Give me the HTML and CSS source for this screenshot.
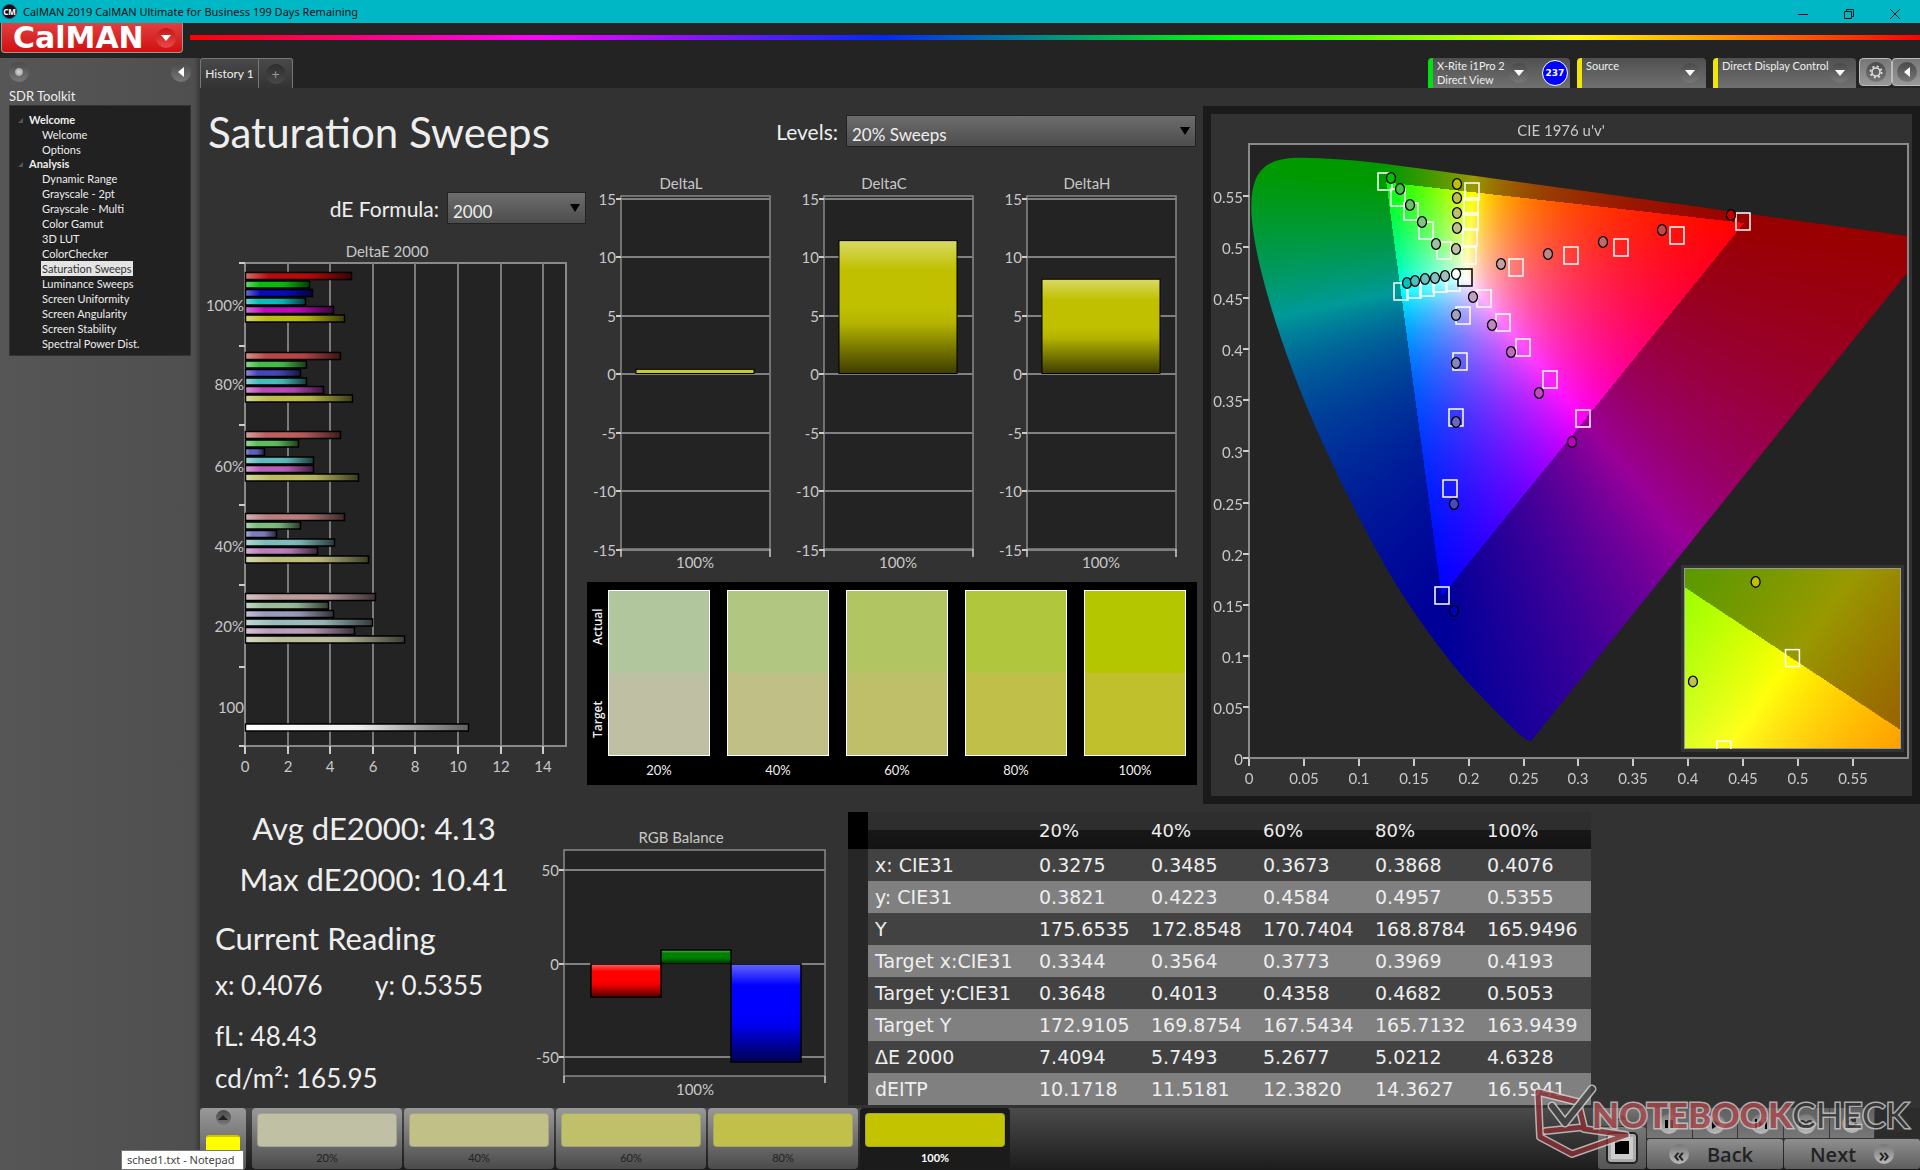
FILE: index.html
```html
<!DOCTYPE html>
<html lang="en">
<head>
<meta charset="utf-8">
<title>CalMAN 2019 CalMAN Ultimate for Business</title>
<link rel="stylesheet" href="styles.css">
</head>
<body>
<div class="app">
  <header class="titlebar">
    <span class="app-icon">CM</span>
    <span class="titlebar-text">CalMAN 2019 CalMAN Ultimate for Business 199 Days Remaining</span>
    <div class="window-buttons">
      <button aria-label="Minimize"><svg width="10" height="10" viewBox="0 0 10 10"><path d="M0 5.5h10"/></svg></button>
      <button aria-label="Restore"><svg width="10" height="10" viewBox="0 0 10 10"><path d="M.5 2.5h7v7h-7zM2.5 2.5v-2h7v7h-2"/></svg></button>
      <button aria-label="Close"><svg width="10" height="10" viewBox="0 0 10 10"><path d="M0 0l10 10M10 0L0 10"/></svg></button>
    </div>
  </header>
  <div class="brandbar">
    <button class="brand">CalMAN <span class="round red"><i class="tri down"></i></span></button>
    <div class="spectrum"></div>
  </div>
  <div class="body">
    <aside class="sidebar">
      <div class="side-tools"><span class="round"><i class="dot"></i></span><button class="round" aria-label="Collapse"><i class="tri left"></i></button></div>
      <h2>SDR Toolkit</h2>
      <nav class="tree">
        <h3>Welcome</h3>
        <ul><li><a href="#">Welcome</a></li><li><a href="#">Options</a></li></ul>
        <h3>Analysis</h3>
        <ul>
          <li><a href="#">Dynamic Range</a></li><li><a href="#">Grayscale - 2pt</a></li><li><a href="#">Grayscale - Multi</a></li>
          <li><a href="#">Color Gamut</a></li><li><a href="#">3D LUT</a></li><li><a href="#">ColorChecker</a></li>
          <li><a href="#" class="current">Saturation Sweeps</a></li><li><a href="#">Luminance Sweeps</a></li><li><a href="#">Screen Uniformity</a></li>
          <li><a href="#">Screen Angularity</a></li><li><a href="#">Screen Stability</a></li><li><a href="#">Spectral Power Dist.</a></li>
        </ul>
      </nav>
    </aside>
    <div class="main">
      <div class="tabrow">
        <div class="tabs"><button>History 1</button><button class="add" aria-label="Add tab"><span class="round dim">+</span></button></div>
        <div class="devices">
          <button class="device meter"><span class="device-name">X-Rite i1Pro 2<br>Direct View</span><span class="round"><i class="tri down"></i></span><span class="count">237</span></button>
          <button class="device source"><span class="device-name">Source</span><span class="round"><i class="tri down"></i></span></button>
          <button class="device display"><span class="device-name">Direct Display Control</span><span class="round"><i class="tri down"></i></span></button>
          <div class="tools">
            <button aria-label="Settings"><span class="round"><svg width="14" height="14" viewBox="0 0 14 14"><circle cx="7" cy="7" r="4" fill="none" stroke="#ddd" stroke-width="1.6"/><circle cx="7" cy="7" r="5.6" fill="none" stroke="#ddd" stroke-width="1.8" stroke-dasharray="2 2.4"/></svg></span></button>
            <button aria-label="Back"><span class="round"><i class="tri left"></i></span></button>
          </div>
        </div>
      </div>
      <main class="workspace">
        <div class="upper">
          <section class="col-error">
            <h1>Saturation Sweeps</h1>
            <div class="field formula"><label for="formula">dE Formula:</label><select id="formula"><option>2000</option></select></div>
            <svg class="chart" id="deltae" viewBox="0 0 387 545" role="img" aria-label="DeltaE 2000"></svg>
          </section>
          <section class="col-delta">
            <div class="field levels"><label for="levels">Levels:</label><select id="levels"><option>20% Sweeps</option></select></div>
            <div class="delta-charts">
              <svg class="chart delta" viewBox="0 0 203 407" data-title="DeltaL" data-value="0.4"></svg>
              <svg class="chart delta" viewBox="0 0 203 407" data-title="DeltaC" data-value="11.4"></svg>
              <svg class="chart delta" viewBox="0 0 203 407" data-title="DeltaH" data-value="8.1"></svg>
            </div>
            <div class="swatches">
              <div class="swatch-sides"><span>Actual</span><span>Target</span></div>
              <figure><div class="pair p20"></div><figcaption>20%</figcaption></figure>
              <figure><div class="pair p40"></div><figcaption>40%</figcaption></figure>
              <figure><div class="pair p60"></div><figcaption>60%</figcaption></figure>
              <figure><div class="pair p80"></div><figcaption>80%</figcaption></figure>
              <figure><div class="pair p100"></div><figcaption>100%</figcaption></figure>
            </div>
          </section>
          <section class="cie">
            <div class="cie-body">
              <canvas id="gamut" width="659" height="614"></canvas>
              <svg id="cie-main" viewBox="0 0 701 680" role="img" aria-label="CIE 1976 u'v'"></svg>
              <div class="inset"><canvas id="zoomed" width="218" height="179"></canvas><svg id="cie-inset" viewBox="0 0 218 179"></svg></div>
            </div>
          </section>
        </div>
        <div class="lower">
          <section class="stats">
            <div class="summary"><p>Avg dE2000: 4.13</p><p>Max dE2000: 10.41</p></div>
            <h2>Current Reading</h2>
            <div class="reading">
              <p class="xy"><span>x: 0.4076</span><span>y: 0.5355</span></p>
              <p class="fl">fL: 48.43</p>
              <p>cd/m²: 165.95</p>
            </div>
          </section>
          <svg class="chart" id="rgb" viewBox="0 0 308 300" role="img" aria-label="RGB Balance"></svg>
          <table>
            <thead><tr><td class="gutter"></td><th></th><th>20%</th><th>40%</th><th>60%</th><th>80%</th><th>100%</th></tr></thead>
            <tbody>
              <tr><td class="gutter"></td><th>x: CIE31</th><td>0.3275</td><td>0.3485</td><td>0.3673</td><td>0.3868</td><td>0.4076</td></tr>
              <tr><td class="gutter"></td><th>y: CIE31</th><td>0.3821</td><td>0.4223</td><td>0.4584</td><td>0.4957</td><td>0.5355</td></tr>
              <tr><td class="gutter"></td><th>Y</th><td>175.6535</td><td>172.8548</td><td>170.7404</td><td>168.8784</td><td>165.9496</td></tr>
              <tr><td class="gutter"></td><th>Target x:CIE31</th><td>0.3344</td><td>0.3564</td><td>0.3773</td><td>0.3969</td><td>0.4193</td></tr>
              <tr><td class="gutter"></td><th>Target y:CIE31</th><td>0.3648</td><td>0.4013</td><td>0.4358</td><td>0.4682</td><td>0.5053</td></tr>
              <tr><td class="gutter"></td><th>Target Y</th><td>172.9105</td><td>169.8754</td><td>167.5434</td><td>165.7132</td><td>163.9439</td></tr>
              <tr><td class="gutter"></td><th>ΔE 2000</th><td>7.4094</td><td>5.7493</td><td>5.2677</td><td>5.0212</td><td>4.6328</td></tr>
              <tr><td class="gutter"></td><th>dEITP</th><td>10.1718</td><td>11.5181</td><td>12.3820</td><td>14.3627</td><td>16.5941</td></tr>
            </tbody>
          </table>
        </div>
      </main>
      <footer class="patchbar">
        <button class="pattern" aria-label="Pattern"><span class="round small"><i class="tri up"></i></span><i class="chip"></i></button>
        <div class="patches">
          <button><i class="c20"></i>20%</button>
          <button><i class="c40"></i>40%</button>
          <button><i class="c60"></i>60%</button>
          <button><i class="c80"></i>80%</button>
          <button class="active"><i class="c100"></i>100%</button>
        </div>
        <div class="controls">
          <div class="stopcol">
            <button aria-label="Expand"><i class="tri up"></i></button>
            <button aria-label="Stop"><svg width="32" height="32" viewBox="0 0 32 32"><rect x="1" y="1" width="30" height="30" rx="4" fill="#aaa" stroke="#222" stroke-width="2"/><rect x="5" y="5" width="22" height="22" fill="#ccc"/><rect x="9" y="9" width="14" height="13" fill="#000"/></svg></button>
          </div>
          <div class="transport">
            <div class="media">
              <button aria-label="Pause"><span class="round light"><svg width="10" height="10"><path d="M1 1h3v8H1zM6 1h3v8H6z"/></svg></span></button>
              <button aria-label="Play"><span class="round light"><svg width="10" height="10"><path d="M2 0l8 5-8 5z"/></svg></span></button>
              <button aria-label="Step"><span class="round light"><svg width="12" height="10"><path d="M0 0h2v10H0zM10 0h2v10h-2zM4 1l4 4-4 4z"/></svg></span></button>
              <button aria-label="Continuous"><span class="round light"><svg width="14" height="8"><path d="M7 4C5 0 1 0 1 4s4 4 6 0 6-4 6 0-4 4-6 0z" fill="none" stroke="#333" stroke-width="2"/></svg></span></button>
              <button aria-label="Repeat"><span class="round light"><svg width="12" height="12"><path d="M2 6a4 4 0 0 1 7-2M10 6a4 4 0 0 1-7 2M9 1v3H6M3 11V8h3" fill="none" stroke="#333" stroke-width="2"/></svg></span></button>
              <button class="off" aria-label="Unused"><span class="round dark"></span></button>
            </div>
            <div class="nav">
              <button><span class="round light">«</span>Back</button>
              <button>Next<span class="round light">»</span></button>
            </div>
          </div>
        </div>
      </footer>
    </div>
  </div>
  <div class="tooltip" role="tooltip">sched1.txt - Notepad</div>
  <svg class="watermark" width="386" height="80" viewBox="0 0 386 80" aria-label="Notebookcheck">
    <g fill="none" stroke-linejoin="round" stroke-linecap="round">
      <path d="M8 10L48 20M8 10L10 55L42 72L96 53L54 47M48 20L54 45L16 49" stroke="#d5d0d0" stroke-width="8"/>
      <path d="M8 10L48 20M8 10L10 55L42 72L96 53L54 47M48 20L54 45L16 49" stroke="#8c3034" stroke-width="5"/>
      <path d="M22 24L35 41L62 7" stroke="#d8d8d8" stroke-width="9"/><path d="M22 24L35 41L62 7" stroke="#444" stroke-width="6"/>
    </g>
    <text x="62" y="46"><tspan class="wm-red">NOTEBOOK</tspan><tspan class="wm-dark">CHECK</tspan></text>
  </svg>
</div>
<script src="charts.js"></script>
</body>
</html>
```
FILE: styles.css
```css
* { box-sizing: border-box; }
body { margin: 0; background: #232323; color: #eee; font-family: Lato, "Liberation Sans", sans-serif; }
h1, h2, h3, p, ul, figure { margin: 0; padding: 0; font-weight: 400; }
button { border: 0; padding: 0; margin: 0; background: none; color: inherit; font: inherit; }
a { color: inherit; text-decoration: none; }
.app { min-height: 100vh; display: flex; flex-direction: column; position: relative; }

.titlebar { height: 23px; background: #00b7c6; color: #111; display: flex; align-items: center; gap: 6px; padding-left: 2px; font-family: "Noto Sans", sans-serif; }
.titlebar-text { font-size: 11px; flex: 1; }
.app-icon { width: 15px; height: 15px; border-radius: 50%; background: #111; color: #fff; font-size: 8px; line-height: 13px; font-weight: 700; text-align: center; border: 1px solid #536; }
.window-buttons { display: flex; padding-right: 2px; }
.window-buttons button { width: 46px; height: 20px; }
.window-buttons svg { fill: none; stroke: #111; stroke-width: 1; }

.brandbar { display: flex; height: 35px; gap: 7px; padding-left: 1px; }
.brand { width: 182px; height: 30px; padding: 0 6px 0 11px; background: linear-gradient(#e04040, #d01010); border: 1px solid #999; border-top: 0; border-radius: 0 0 4px 4px; color: #fff; display: flex; align-items: center; justify-content: space-between; font: 700 30px/28px "DejaVu Sans", sans-serif; }
.spectrum { flex: 1; height: 5px; margin-top: 12px; background: linear-gradient(90deg, #f00 0%, #f0f 20%, #0028ff 40%, #0f0 60%, #ff0 80%, #f00 100%); }

.round { display: inline-flex; align-items: center; justify-content: center; width: 20px; height: 20px; border-radius: 50%; background: linear-gradient(#4a4a4a, #777); color: #999; flex: none; }
.round.red { background: linear-gradient(#c41515, #ea4a4a); }
.round.dim { background: linear-gradient(#2d2d2d, #494949); font-size: 14px; }
.round.small { width: 15px; height: 15px; }
.round.light { background: linear-gradient(#777, #bbb); color: #222; }
.round.dark { background: #303030; }
.tri { display: block; width: 0; height: 0; border: 5px solid transparent; }
.tri.down { border-top: 6px solid #fff; border-bottom: 0; }
.tri.up { border-bottom: 5px solid #222; border-top: 0; }
.tri.left { border-right: 6px solid #fff; border-left: 0; }
.dot { width: 8px; height: 8px; border-radius: 50%; background: radial-gradient(#ddd, #888); }

.body { flex: 1; display: flex; }
.sidebar { width: 200px; flex: none; padding: 4px 9px; background: linear-gradient(90deg, #565656, #4f4f4f 97%, #3a3a3a); }
.side-tools { display: flex; justify-content: space-between; }
.sidebar h2 { font-size: 13px; line-height: 16px; margin-top: 6px; margin-bottom: 1px; }
.tree { background: #212121; border: 1px solid #333; height: 251px; padding: 7px 0 0 19px; font-size: 11px; line-height: 15px; }
.tree h3 { font-size: 11px; line-height: 14px; font-weight: 700; position: relative; }
.tree h3::before { content: ""; position: absolute; left: -11px; top: 5px; border-left: 5px solid transparent; border-bottom: 5px solid #555; }
.tree ul { list-style: none; padding-left: 12px; }
.tree li { height: 15px; }
.tree a { display: inline-block; white-space: nowrap; padding: 0 1px; }
.tree .current { background: #e4e4e4; color: #333; }

.main { flex: 1; min-width: 0; display: flex; flex-direction: column; }
.tabrow { display: flex; justify-content: space-between; height: 30px; background: #232323; }
.tabs { display: flex; }
.tabs button { border: 1px solid #777; border-bottom: 0; background: linear-gradient(#494949, #333); font-size: 12px; padding: 0 4px; width: 59px; white-space: nowrap; border-radius: 3px 0 0 0; }
.tabs .add { width: 34px; border-left: 0; border-radius: 0 3px 0 0; }
.devices { display: flex; }
.device { display: flex; align-items: center; justify-content: space-between; text-align: left; background: linear-gradient(#505050, #707070); border-left: 5px solid #f0e600; border-radius: 4px 4px 0 0; padding: 0 6px 0 4px; margin-right: 7px; font-size: 11px; line-height: 14px; white-space: nowrap; width: 129px; }
.device-name { align-self: flex-start; padding-top: 1px; }
.device.meter { border-color: #00e010; width: 142px; padding-right: 2px; gap: 4px; justify-content: flex-start; }
.device.display { width: 143px; margin-right: 3px; }
.count { margin-left: auto; width: 26px; height: 26px; border-radius: 50%; background: #00f; border: 1px solid #fff; font: 700 9px/24px "DejaVu Sans", sans-serif; text-align: center; color: #fff; }
.tools { display: flex; height: 28px; }
.tools button { width: 33px; border: 1px solid #bbb; border-radius: 4px; background: linear-gradient(#777, #999); display: flex; align-items: center; justify-content: center; }
.tools button + button { width: 28px; border-right: 0; border-radius: 4px 0 0 4px; }

.workspace { flex: 1; background: #323232; }
.upper { display: grid; grid-template-columns: 387fr 616fr 717fr; align-items: start; }
.chart { display: block; width: 100%; height: auto; overflow: visible; }
svg text { font-size: 15px; fill: #c8c8c8; }
h1 { font-size: 42px; line-height: 52px; padding: 18px 0 0 8px; white-space: nowrap; }
.field { position: relative; display: flex; justify-content: flex-end; align-items: center; gap: 8px; font-size: 21px; }
.field select { appearance: none; height: 32px; border: 1px solid #222; border-radius: 0; color: #eee; font: 17px Lato, sans-serif; padding: 6px 5px 0; background: linear-gradient(#6c6c6c, #4d4d4d); }
.field::after { content: ""; position: absolute; right: 6px; top: 12px; border: 5px solid transparent; border-top: 8px solid #000; border-bottom: 0; }
.formula { margin-top: 34px; margin-right: 1px; }
.formula select { width: 139px; }
.col-error .chart { margin-top: 16px; }
.levels { margin: 27px 7px 23px 0; }
.levels select { width: 350px; }
.delta-charts { display: grid; grid-template-columns: repeat(3, 1fr); margin-right: 7px; }
.swatches { margin: 5px 6px 0 0; background: #000; height: 203px; padding: 8px 11px 0 4px; display: grid; grid-template-columns: 17px repeat(4, 119fr) 102fr; }
.swatch-sides { display: flex; flex-direction: column; height: 166px; justify-content: space-between; align-items: flex-start; font: 600 12px/14px "Open Sans", sans-serif; padding: 5px 0; }
.swatch-sides span { writing-mode: vertical-rl; transform: rotate(180deg); height: 64px; text-align: center; }
.swatches figure { margin-right: 17px; text-align: center; font-size: 13px; }
.swatches figure:last-child { margin-right: 0; }
.pair { height: 166px; border: 1px solid #fff; }
figcaption { line-height: 28px; }
.p20 { background: linear-gradient(#b2c69e 50%, #bfbfa4 50%); }
.p40 { background: linear-gradient(#b1c680 50%, #bfbf86 50%); }
.p60 { background: linear-gradient(#b1c662 50%, #bfbf69 50%); }
.p80 { background: linear-gradient(#b0c63c 50%, #bfbf4a 50%); }
.p100 { background: linear-gradient(#b3c600 50%, #c0c02c 50%); }

.cie { margin-top: 18px; background: #1a1a1a; padding: 8px; }
.cie-body { position: relative; background: #323232; aspect-ratio: 701 / 682; }
.cie-body > svg { position: absolute; left: 0; top: 0; width: 100%; }
#gamut { position: absolute; left: 5.42%; top: 4.4%; width: 94.01%; height: 90.03%; background: #232323; }
.inset { position: absolute; left: 67%; top: 66.2%; width: 31.8%; height: 27.3%; border: 3px solid #333; }
.inset canvas, .inset svg { position: absolute; inset: 0; width: 100%; height: 100%; }
.inset canvas { border: 1px solid #999; }

.lower { display: grid; grid-template-columns: 340fr 308fr 743fr 329fr; align-items: start; }
.stats { padding: 4px 0 0 15px; }
.summary { font-size: 31px; line-height: 40px; text-align: center; display: grid; gap: 11px; margin-left: -7px; }
.stats h2 { font-size: 31px; line-height: 40px; margin-top: 19px; }
.reading { font-size: 26px; line-height: 40px; margin-top: 7px; }
.xy { display: grid; grid-template-columns: 160px 1fr; }
.fl { margin: 11px 0 2px; }
table { margin-top: 8px; border-collapse: collapse; table-layout: fixed; width: 100%; font: 19px/32px "DejaVu Sans", sans-serif; }
th, table td { padding: 0; text-align: left; font-weight: 400; height: 32px; white-space: nowrap; }
thead th { height: 37px; width: 112px; background: linear-gradient(#2e2e2e 50%, #171717 50%, #131313); font-size: 18px; }
thead th:nth-child(2) { width: 171px; }
thead th:last-child { width: 104px; }
table .gutter { width: 20px; background: #262626; }
thead .gutter { background: #000; }
tbody th { padding-left: 7px; }
tbody tr { background: #424242; }
tbody tr:nth-child(even) { background: #808080; }

.patchbar { height: 62px; display: flex; background: linear-gradient(#4b4b4b, #1c1c1c); }
.pattern { width: 46px; margin-right: 6px; border-radius: 4px; background: linear-gradient(#999, #555); display: flex; flex-direction: column; align-items: center; padding-top: 2px; gap: 10px; }
.chip { display: block; width: 34px; height: 26px; background: #ff0; border-radius: 3px; border-top: 2px solid #c8c800; }
.patches { display: flex; gap: 2px; }
.patches button { width: 150px; height: 61px; border-radius: 4px; background: linear-gradient(#999, #4b4b4b); color: #222; font-size: 11px; padding: 5px; display: flex; flex-direction: column; gap: 4px; align-items: center; }
.patches i { display: block; align-self: stretch; height: 36px; border-radius: 4px; border: 1px solid #8888; }
.patches .active { background: #1b1b1b; color: #fff; font-weight: 700; }
.c20 { background: #c0c0a5; } .c40 { background: #c0c087; } .c60 { background: #c0c06a; } .c80 { background: #c0c04b; } .c100 { background: #c3c300; }
.controls { margin-left: auto; display: flex; width: 322px; gap: 1px; }
.stopcol { width: 48px; display: grid; grid-template-rows: 18px 42px; gap: 1px; }
.stopcol button { background: linear-gradient(#777, #555); display: flex; align-items: center; justify-content: center; border-radius: 3px; }
.transport { flex: 1; display: grid; grid-template-rows: 30px 30px; gap: 1px; }
.media { display: grid; grid-template-columns: repeat(6, 1fr); gap: 1px; }
.media button { background: linear-gradient(#606060, #777); }
.media .off { background: #2c2c2c; }
.nav { display: grid; grid-template-columns: 1fr 1fr; gap: 1px; }
.nav button { background: linear-gradient(#8f8f8f, #5e5e5e); color: #222; font: 600 20px "Open Sans", sans-serif; border-radius: 3px; display: flex; align-items: center; justify-content: center; gap: 18px; padding-right: 8px; }
.nav button + button { padding: 0; }

.tooltip { position: absolute; left: 121px; bottom: 0; background: #fff; color: #444; border: 1px solid #777; font: 11px/18px "Noto Sans", sans-serif; padding: 0 5px; width: 123px; white-space: nowrap; }
.watermark { position: absolute; right: 4px; bottom: 8px; opacity: .8; pointer-events: none; }
.watermark text { font: 900 35px Lato, sans-serif; paint-order: stroke; stroke: #ccc; stroke-width: 3; }
.watermark .wm-red { fill: #ab4a4e; }
.watermark .wm-dark { fill: #383838; font-weight: 400; }
```
FILE: charts.js
```js
const NS = 'http://www.w3.org/2000/svg';

function add(svg, tag, attrs, text) {
  const node = document.createElementNS(NS, tag);
  for (const key in attrs) node.setAttribute(key, attrs[key]);
  if (text !== undefined) node.textContent = text;
  svg.appendChild(node);
  return node;
}
function line(svg, x1, y1, x2, y2, color = '#8a8a8a', w = 2) {
  add(svg, 'line', { x1, y1, x2, y2, stroke: color, 'stroke-width': w });
}
function label(svg, x, y, text, anchor = 'middle') {
  add(svg, 'text', { x, y: y + 5, 'text-anchor': anchor }, text);
}
let gradients = 0;
function gradient(svg, stops, vertical) {
  const id = 'g' + gradients++;
  const g = add(svg, 'linearGradient', { id, x1: 0, y1: 0, x2: vertical ? 0 : 1, y2: vertical ? 1 : 0 });
  stops.forEach(([offset, color]) => add(g, 'stop', { offset, 'stop-color': color }));
  return `url(#${id})`;
}
const mix = (a, b, t) => a.map((v, i) => Math.round(v + (b[i] - v) * t));
const css = c => `rgb(${c.join(',')})`;
function shaded(svg, c, vertical) {
  return gradient(svg, [[0, css(mix(c, [255, 255, 255], .4))], [.22, css(c)], [.5, css(c)], [.62, css(mix(c, [0, 0, 0], .06))], [1, css(mix(c, [0, 0, 0], .68))]], vertical);
}

/* DeltaE 2000: one horizontal bar per colour at each saturation level */
(function () {
  const svg = document.getElementById('deltae');
  add(svg, 'rect', { x: 45, y: 23, width: 321, height: 483, fill: '#232323', stroke: '#8a8a8a', 'stroke-width': 2 });
  label(svg, 187, 12, 'DeltaE 2000');
  for (let v = 0; v <= 14; v += 2) {
    const x = Math.round(45 + v * 21.3);
    if (v) line(svg, x, 23, x, 506, '#7b7b7b');
    line(svg, x, 506, x, 514, '#ccc');
    label(svg, x, 527, v);
  }
  [23, 106, 185, 265, 345, 427, 506].forEach(y => line(svg, 39, y, 45, y, '#ccc'));
  [[66, '100%'], [145, '80%'], [227, '60%'], [307, '40%'], [387, '20%'], [468, '100']].forEach(([y, t]) => label(svg, 44, y, t, 'end'));
  const hues = [[1, 0, 0], [0, 1, 0], [0, 0, 1], [0, 1, 1], [1, 0, 1], [1, 1, 0]];
  const groups = [
    [36, 10, [106, 64, 67, 60, 88, 99]], [116, 70, [95, 61, 55, 61, 78, 107]], [195, 95, [95, 53, 19, 68, 68, 113]],
    [277, 125, [99, 55, 31, 89, 72, 123]], [357, 155, [130, 83, 88, 127, 109, 159]]
  ];
  groups.forEach(([top, low, widths]) => widths.forEach((w, i) => {
    const c = hues[i].map(h => h ? 188 : low);
    add(svg, 'rect', { x: 45.5, y: top - 3.5 + i * 8.5, width: w, height: 7, fill: shaded(svg, c), stroke: '#000', 'stroke-width': 1.5 });
  }));
  add(svg, 'rect', { x: 45.5, y: 484, width: 223, height: 7, fill: gradient(svg, [[0, '#fff'], [.5, '#f0f0f0'], [1, '#606060']]), stroke: '#000', 'stroke-width': 1.5 });
})();

/* DeltaL, DeltaC and DeltaH columns */
document.querySelectorAll('.delta').forEach(svg => {
  const value = +svg.dataset.value;
  const y = v => 204 - v * 11.7;
  label(svg, 94, 14, svg.dataset.title);
  add(svg, 'rect', { x: 34, y: 26, width: 149, height: 353, fill: '#232323', stroke: '#8a8a8a', 'stroke-width': 1.5 });
  for (let v = 15; v >= -15; v -= 5) {
    const py = Math.round(y(v));
    line(svg, 34, py, 183, py, '#808080');
    line(svg, 29, py, 34, py, '#ccc');
    label(svg, 29, py + 1, v, 'end');
  }
  line(svg, 34, 379, 34, 387, '#ccc', 1.5);
  line(svg, 183, 379, 183, 387, '#ccc', 1.5);
  label(svg, 108, 393, '100%');
  const tall = value > 1;
  add(svg, 'rect', { x: 49, y: y(value), width: 118, height: 203.5 - y(value), fill: tall ? shaded(svg, [192, 192, 0], true) : '#c8c83a', stroke: '#000', 'stroke-width': 1 });
});

/* RGB balance */
(function () {
  const svg = document.getElementById('rgb');
  label(svg, 141, 34, 'RGB Balance');
  add(svg, 'rect', { x: 24, y: 46, width: 261, height: 226, fill: '#232323', stroke: '#8a8a8a', 'stroke-width': 1.5 });
  [[66, 50], [160, 0], [253, -50]].forEach(([y, t]) => {
    line(svg, 24, y, 285, y, '#808080');
    line(svg, 19, y, 24, y, '#ccc');
    label(svg, 19, y + 1, t, 'end');
  });
  line(svg, 24, 272, 24, 279, '#ccc', 1.5);
  line(svg, 285, 272, 285, 279, '#ccc', 1.5);
  label(svg, 155, 286, '100%');
  [[51, 160, 33, [255, 0, 0]], [121, 146, 14, [0, 128, 0]], [191, 160, 98, [0, 0, 255]]].forEach(([x, y, h, c]) =>
    add(svg, 'rect', { x, y, width: 70, height: h, fill: shaded(svg, c, true), stroke: '#000', 'stroke-width': 1.5 }));
})();

/* Chromaticity colours: full brightness inside Rec.709, dimmed outside it */
function chroma(x, y) {
  const X = x / y, Z = (1 - x - y) / y;
  const lin = [3.2406 * X - 1.5372 - .4986 * Z, -.9689 * X + 1.8758 + .0415 * Z, .0557 * X - .204 + 1.057 * Z];
  const inside = Math.min(...lin) >= 0;
  const max = Math.max(...lin);
  return lin.map(v => Math.max(v, 0) / max * (inside ? 255 : 153));
}
function paint(canvas, toXY) {
  const ctx = canvas.getContext('2d'), w = canvas.width, h = canvas.height;
  const img = ctx.createImageData(w, h);
  for (let j = 0; j < h; j++) for (let i = 0; i < w; i++) {
    const [x, y] = toXY((i + .5) / w, 1 - (j + .5) / h);
    const c = chroma(x, Math.max(y, .0001));
    img.data.set([c[0], c[1], c[2], 255], (j * w + i) * 4);
  }
  ctx.putImageData(img, 0, 0);
  return ctx;
}
const locus = [[.1741, .005], [.1714, .0051], [.1644, .0109], [.1566, .0177], [.144, .0297], [.1241, .0578], [.1096, .0868], [.0913, .1327], [.0687, .2007], [.0454, .295], [.0235, .4127], [.0082, .5384], [.0039, .6548], [.0139, .7502], [.0389, .812], [.0743, .8338], [.1142, .8262], [.1547, .8059], [.2296, .7543], [.3016, .6923], [.3731, .6245], [.4441, .5547], [.5125, .4866], [.5752, .4242], [.627, .3725], [.6915, .3083], [.719, .2809], [.7347, .2653]];
(function () {
  const canvas = document.getElementById('gamut');
  const ctx = paint(canvas, (s, t) => {
    const u = s * .6, v = t * .6, d = 6 * u - 16 * v + 12;
    return [9 * u / d, 4 * v / d];
  });
  const pts = locus.map(([x, y]) => {
    const d = -2 * x + 12 * y + 3;
    return [4 * x / d / .6 * canvas.width, (1 - 9 * y / d / .6) * canvas.height];
  });
  ctx.globalCompositeOperation = 'destination-in';
  ctx.beginPath();
  ctx.moveTo(...pts[0]);
  for (let i = 1; i < pts.length - 1; i++) {
    ctx.quadraticCurveTo(pts[i][0], pts[i][1], (pts[i][0] + pts[i + 1][0]) / 2, (pts[i][1] + pts[i + 1][1]) / 2);
  }
  ctx.lineTo(...pts[pts.length - 1]);
  ctx.closePath();
  ctx.fill();
  paint(document.getElementById('zoomed'), (s, t) => [.3843 + s * .07, .4703 + t * .07]);
})();

(function () {
  const svg = document.getElementById('cie-main');
  label(svg, 350, 17, "CIE 1976 u'v'");
  add(svg, 'rect', { x: 38, y: 30, width: 659, height: 614, fill: 'none', stroke: '#8a8a8a', 'stroke-width': 2 });
  for (let i = 0; i < 12; i++) {
    const t = String(i * 5 / 100), x = Math.round(38 + i * 54.9), y = Math.round(644 - i * 51.1);
    line(svg, x, 645, x, 652, '#ccc');
    label(svg, x, 665, t);
    line(svg, 32, y, 38, y, '#ccc');
    label(svg, 32, y + 2, t, 'end');
  }
  const square = (s, x, y, stroke = '#fff') => add(s, 'rect', { x: x - 7, y: y - 8, width: 14, height: 17, fill: 'none', stroke, 'stroke-width': 1.5 });
  const dot = (s, x, y, c) => add(s, 'ellipse', { cx: x, cy: y, rx: 4.5, ry: 5.3, fill: css(c), stroke: '#000', 'stroke-width': 1.3 });
  const ox = 1211, oy = 114;
  const targets = [
    [1385, 181], [1398, 197], [1411, 211], [1426, 230], [1444, 250], [1472, 191], [1471, 206], [1471, 221], [1470, 237], [1469, 255],
    [1401, 291], [1414, 289], [1427, 287], [1440, 283], [1453, 282], [1484, 298], [1503, 322], [1523, 347], [1550, 379], [1583, 418],
    [1463, 315], [1460, 361], [1456, 417], [1450, 488], [1442, 595], [1516, 267], [1571, 255], [1621, 247], [1677, 235], [1743, 221]
  ];
  targets.forEach(([x, y]) => square(svg, x - ox, y - oy));
  square(svg, 254, 163, '#000');
  const readings = [
    [[0, 1, 0], [[1391, 178], [1400, 189], [1410, 205], [1422, 222], [1436, 244]]],
    [[1, 1, 0], [[1457, 184], [1457, 198], [1457, 213], [1457, 228], [1456, 249]]],
    [[0, 1, 1], [[1407, 283], [1415, 281], [1425, 279], [1435, 278], [1445, 276]]],
    [[1, 0, 1], [[1572, 442], [1539, 393], [1511, 352], [1492, 325], [1473, 297]]],
    [[0, 0, 1], [[1454, 611], [1454, 504], [1456, 422], [1456, 363], [1456, 315]]],
    [[1, 0, 0], [[1731, 215], [1662, 230], [1603, 242], [1548, 254], [1501, 264]]]
  ];
  const lows = [0, 74, 105, 134, 162];
  readings.forEach(([hue, pts]) => pts.forEach(([x, y], i) => dot(svg, x - ox, y - oy, hue.map(h => h ? 192 : lows[i]))));
  dot(svg, 245, 160, [255, 255, 255]);
  const inset = document.getElementById('cie-inset');
  square(inset, 109, 89);
  square(inset, 40, 181);
  dot(inset, 72, 13, [192, 192, 0]);
  dot(inset, 9, 113, [192, 192, 74]);
})();
```
